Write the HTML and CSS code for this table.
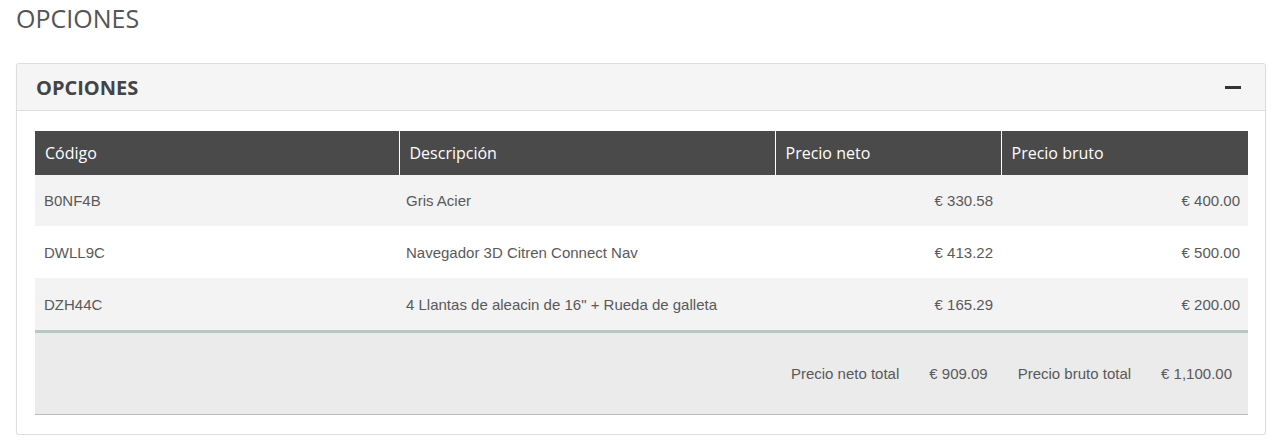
FILE: index.html
```html
<!DOCTYPE html>
<html lang="es">
<head>
<meta charset="utf-8">
<title>Opciones</title>
<link rel="stylesheet" href="styles.css">
</head>
<body>
<h1 class="page-title">OPCIONES</h1>
<section class="panel">
  <header class="panel-head">
    <h2 class="panel-title">OPCIONES</h2>
    <span class="collapse-icon" aria-label="Contraer"></span>
  </header>
  <div class="panel-body">
    <table class="opt-table">
      <colgroup>
        <col class="c1"><col class="c2"><col class="c3"><col class="c4">
      </colgroup>
      <thead>
        <tr><th>Código</th><th>Descripción</th><th>Precio neto</th><th>Precio bruto</th></tr>
      </thead>
      <tbody>
        <tr><td>B0NF4B</td><td>Gris Acier</td><td class="num">€ 330.58</td><td class="num">€ 400.00</td></tr>
        <tr><td>DWLL9C</td><td>Navegador 3D Citren Connect Nav</td><td class="num">€ 413.22</td><td class="num">€ 500.00</td></tr>
        <tr><td>DZH44C</td><td>4 Llantas de aleacin de 16" + Rueda de galleta</td><td class="num">€ 165.29</td><td class="num">€ 200.00</td></tr>
      </tbody>
      <tfoot>
        <tr><td colspan="4">
          <div class="totals">
            <span class="t-label">Precio neto total</span>
            <span class="t-val">€ 909.09</span>
            <span class="t-label">Precio bruto total</span>
            <span class="t-val">€ 1,100.00</span>
          </div>
        </td></tr>
      </tfoot>
    </table>
  </div>
</section>
</body>
</html>
```
FILE: styles.css
```css
html, body {
  margin: 0;
  padding: 0;
  background: #ffffff;
}
body {
  padding: 2px 14px 0 16px;
  font-family: "Open Sans", "Liberation Sans", sans-serif;
  color: #555555;
}
.page-title {
  margin: 0;
  font-weight: 400;
  font-size: 25px;
  line-height: 32px;
  color: #555555;
}
.panel {
  margin-top: 29px;
  border: 1px solid #dddddd;
  border-radius: 3px;
  box-shadow: 0 1px 2px rgba(0,0,0,0.06);
  background: #ffffff;
}
.panel-head {
  display: flex;
  align-items: center;
  justify-content: space-between;
  height: 46px;
  padding: 0 24px 0 19px;
  background: #f5f5f5;
  border-bottom: 1px solid #dddddd;
  border-radius: 3px 3px 0 0;
}
.panel-title {
  margin: 0;
  font-size: 20px;
  font-weight: 700;
  color: #444444;
}
.collapse-icon {
  display: block;
  width: 16px;
  height: 3px;
  background: #333333;
}
.panel-body {
  padding: 20px 17px 19px 18px;
}
.opt-table {
  width: 100%;
  border-collapse: collapse;
  table-layout: fixed;
  font-family: "Liberation Sans", Arial, sans-serif;
  font-size: 15px;
  color: #595959;
}
.c1 { width: 364px; }
.c2 { width: 376px; }
.c3 { width: 226px; }
.c4 { width: auto; }
.opt-table thead th {
  background: #4a4a4a;
  color: #ffffff;
  font-family: "Open Sans", sans-serif;
  font-weight: 400;
  font-size: 16px;
  text-align: left;
  height: 44px;
  padding: 0 10px;
  border-left: 1px solid #ffffff;
}
.opt-table thead th:first-child {
  border-left: none;
}
.opt-table tbody td {
  height: 52px;
  padding: 0 8px 0 9px;
}
.opt-table tbody tr:first-child td {
  height: 51px;
}
.opt-table tbody td:nth-child(2) {
  padding-left: 7px;
}
.opt-table tbody tr:nth-child(odd) td {
  background: #f3f3f3;
}
.opt-table tbody tr:nth-child(even) td {
  background: #ffffff;
}
.opt-table td.num {
  text-align: right;
}
.opt-table tfoot td {
  background: #ebebeb;
  border-top: 3px solid #b9c8c3;
  border-bottom: 1px solid #bbbbbb;
  height: 81px;
  padding: 0 16px 0 0;
}
.totals {
  display: flex;
  justify-content: flex-end;
  align-items: center;
  gap: 30px;
}
```
